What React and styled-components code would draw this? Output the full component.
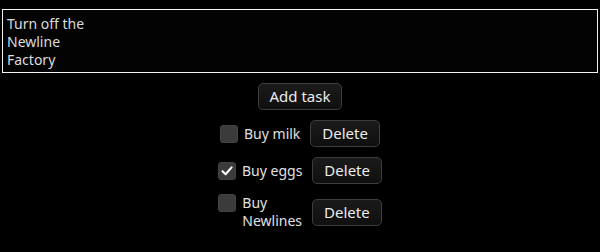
import React, { useState, useRef, useEffect } from "react";
import styled, { createGlobalStyle } from "styled-components";

const Global = createGlobalStyle`
  html, body { margin: 0; padding: 0; background: #000; }
  body { font-family: "Noto Sans", "Open Sans", sans-serif; color: #e4e4e4; }
`;

const Page = styled.div`
  display: flex;
  flex-direction: column;
  align-items: center;
  gap: 10px;
  padding: 9px 2px 0 2px;
`;

const TaskInput = styled.textarea`
  box-sizing: border-box;
  width: 100%;
  height: 64px;
  margin: 0;
  padding: 5px 4px 3px 4px;
  border: 1px solid #f2f2f2;
  border-radius: 0;
  background: #030303;
  color: #dcdcdc;
  font-family: "Noto Sans", "Open Sans", sans-serif;
  font-size: 14px;
  line-height: 18px;
  resize: none;
  outline: none;
  caret-color: #fff;
`;

const Button = styled.button`
  box-sizing: border-box;
  height: 27px;
  padding: 0 11px;
  border: 1px solid #3d3d3d;
  border-radius: 5px;
  background: linear-gradient(#1b1b1b, #0f0f0f);
  color: #ececec;
  font-family: "Noto Sans", "Open Sans", sans-serif;
  font-size: 15px;
  line-height: 25px;
  cursor: pointer;
  flex-shrink: 0;
`;

const Row = styled.div`
  display: flex;
  align-items: center;
  gap: 10px;
`;

const CheckLabel = styled.label`
  display: flex;
  align-items: flex-start;
  gap: 6px;
`;

const Box = styled.span`
  box-sizing: border-box;
  width: 18px;
  height: 18px;
  border-radius: 3px;
  background: #3b3b3b;
  border: 1px solid #444;
  display: flex;
  align-items: center;
  justify-content: center;
  flex-shrink: 0;
`;

const LabelText = styled.span`
  font-size: 14px;
  line-height: 18px;
  color: #e0e0e0;
  white-space: pre-line;
`;

const Check = () => (
  <svg width="14" height="14" viewBox="0 0 14 14">
    <path d="M2.5 7.2 L5.6 10.2 L11.6 3.4" fill="none" stroke="#fff" strokeWidth="2.1" strokeLinecap="round" strokeLinejoin="round" />
  </svg>
);

export default function App() {
  const [text, setText] = useState("Turn off the\nNewline\nFactory");
  const [tasks, setTasks] = useState([
    { name: "Buy milk", done: false },
    { name: "Buy eggs", done: true },
    { name: "Buy\nNewlines", done: false },
  ]);
  const ref = useRef(null);
  useEffect(() => {
    const el = ref.current;
    if (el) {
      el.focus();
      const n = el.value.length;
      el.setSelectionRange(n, n);
    }
  }, []);
  return (
    <>
      <Global />
      <Page>
        <TaskInput ref={ref} value={text} onChange={(e) => setText(e.target.value)} />
        <Button>Add task</Button>
        {tasks.map((t, i) => (
          <Row key={i}>
            <CheckLabel
              onClick={() =>
                setTasks(tasks.map((x, j) => (j === i ? { ...x, done: !x.done } : x)))
              }
            >
              <Box>{t.done && <Check />}</Box>
              <LabelText>{t.name}</LabelText>
            </CheckLabel>
            <Button>Delete</Button>
          </Row>
        ))}
      </Page>
    </>
  );
}
